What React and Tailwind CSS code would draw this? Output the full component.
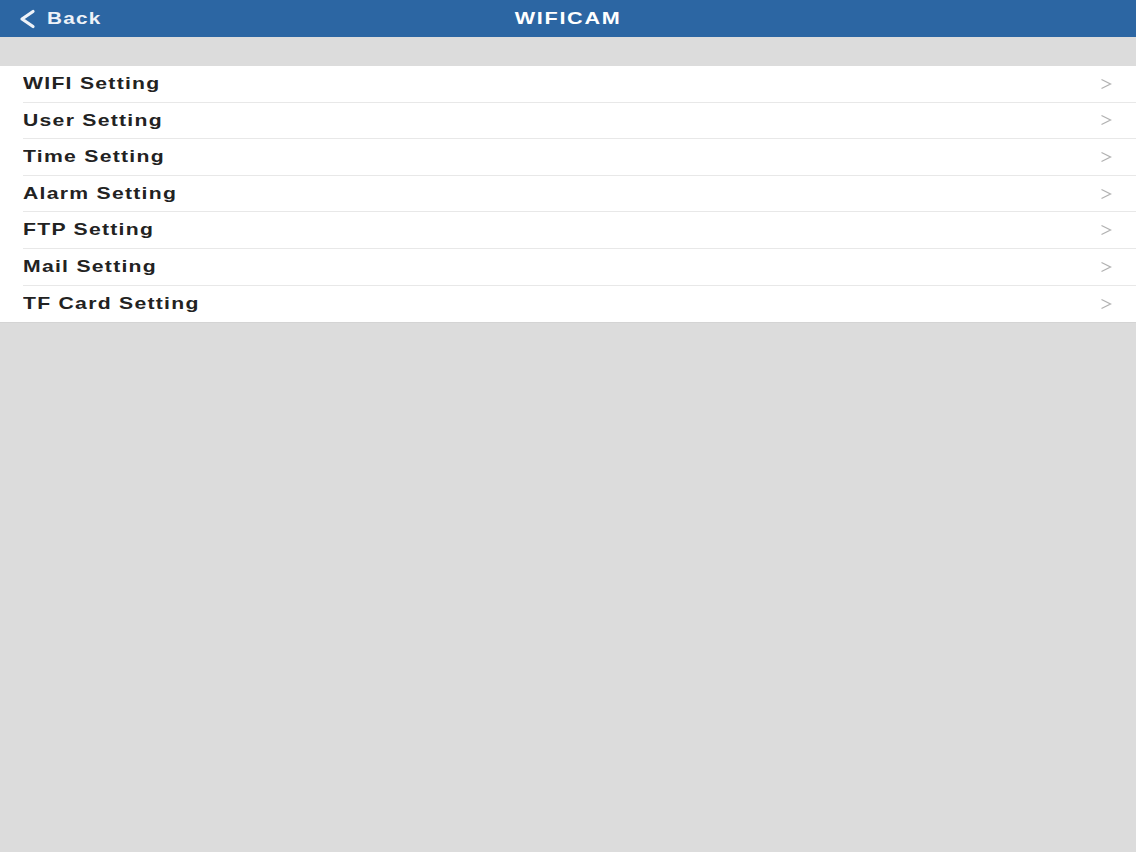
const items = [
  "WIFI Setting",
  "User Setting",
  "Time Setting",
  "Alarm Setting",
  "FTP Setting",
  "Mail Setting",
  "TF Card Setting",
];

const App = () => {
  return (
    <div
      className="min-h-[852px] w-full bg-[#dcdcdc]"
      style={{ fontFamily: '"Liberation Sans", Arial, sans-serif' }}
    >
      {/* Header */}
      <div className="relative h-[37px] bg-[#2c66a3] flex items-center justify-center">
        <div className="absolute left-[17px] top-0 h-full flex items-center text-[#eef2f8]">
          <svg width="20" height="20" viewBox="0 0 20 20" fill="none">
            <polyline
              points="16,2.5 5,10 16,17.5"
              stroke="currentColor"
              strokeWidth="3.2"
              strokeLinecap="round"
              strokeLinejoin="round"
            />
          </svg>
          <span className="ml-[10px] text-[17px] font-semibold tracking-[0.06em] origin-left scale-x-[1.22]">
            Back
          </span>
        </div>
        <h1 className="text-[17px] font-bold text-white tracking-[0.08em] scale-x-[1.27]">
          WIFICAM
        </h1>
      </div>

      {/* Spacer */}
      <div className="h-[29px] bg-[#dcdcdc]" />

      {/* Settings list */}
      <div className="bg-white border-b border-[#d4d4d4]">
        {items.map((item, i) => (
          <div key={item} className="h-[36.6px] flex pl-[23px]">
            <div
              className={`flex-1 h-full flex items-center justify-between pr-[24px] ${
                i < items.length - 1 ? "border-b border-[#e8e8e8]" : ""
              }`}
            >
              <span className="text-[17px] font-semibold text-[#222222] tracking-[0.06em] origin-left scale-x-[1.245] whitespace-nowrap">
                {item}
              </span>
              <svg width="12" height="12" viewBox="0 0 12 12" fill="none">
                <polyline
                  points="1.5,1.5 10.5,6 1.5,10.5"
                  stroke="#b2b2b2"
                  strokeWidth="1.3"
                />
              </svg>
            </div>
          </div>
        ))}
      </div>
    </div>
  );
};

export default App;
